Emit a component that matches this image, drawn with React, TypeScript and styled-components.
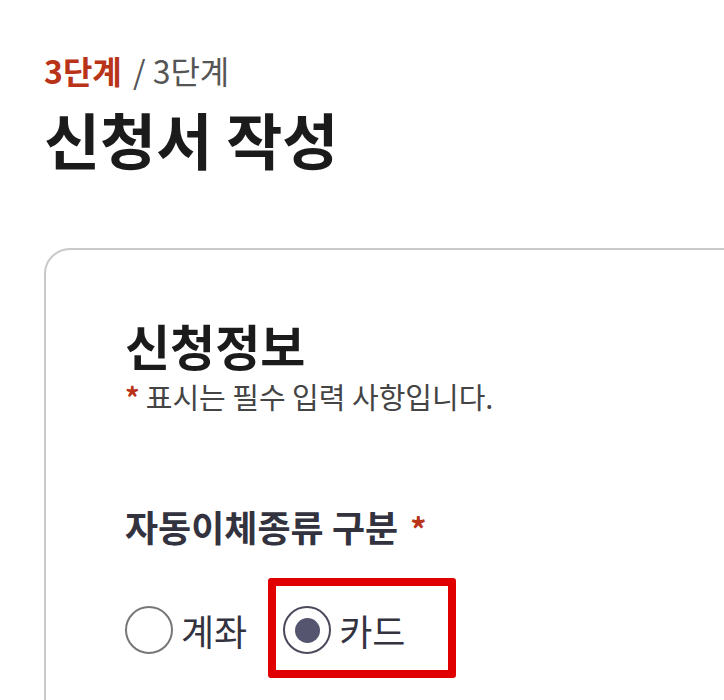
import React, { useState } from 'react'
import styled, { createGlobalStyle } from 'styled-components'

const GlobalStyle = createGlobalStyle`
html, body {
  margin: 0;
  padding: 0;
  background: #ffffff;
  overflow: hidden;
}
body {
  font-family: "Noto Sans CJK KR", "Noto Sans", sans-serif;
  color: #1c1c1c;
}
`

//Components
const Page = styled.div`
width: 724px;
height: 700px;
padding: 50px 0 0 44px;
box-sizing: border-box;
overflow: hidden;
`
const Step = styled.div`
font-size: 32px;
line-height: 40px;
color: #555555;
`
const StepCurrent = styled.strong`
color: #b93318;
font-weight: 700;
margin-right: 4px;
`
const Title = styled.h1`
margin: 11px 0 0 0;
font-size: 61px;
line-height: 76px;
font-weight: 700;
color: #1b1b1b;
`
const Card = styled.section`
margin-top: 71px;
width: 760px;
min-height: 480px;
border: 2px solid #c9c9c9;
border-radius: 26px;
padding: 65px 0 0 79px;
box-sizing: border-box;
`
const SectionTitle = styled.h2`
margin: 0;
font-size: 49px;
line-height: 60px;
font-weight: 700;
color: #1b1b1b;
`
const Notice = styled.p`
margin: 4px 0 0 0;
font-size: 29px;
line-height: 34px;
color: #444444;
`
const Star = styled.span`
color: #b93318;
font-weight: 700;
margin-right: 6px;
`
const FieldLabel = styled.div`
margin-top: 90px;
font-size: 36px;
line-height: 46px;
font-weight: 700;
color: #33333f;
`
const LabelStar = styled.span`
color: #b93318;
margin-left: 12px;
font-size: 32px;
`
const RadioRow = styled.div`
display: flex;
align-items: center;
gap: 36px;
margin-top: 55px;
`
const Option = styled.label`
position: relative;
display: flex;
align-items: center;
gap: 8px;
cursor: pointer;
font-size: 36px;
line-height: 48px;
color: #33333f;
`
const Circle = styled.span<{ $checked: boolean }>`
display: flex;
align-items: center;
justify-content: center;
width: 48px;
height: 48px;
box-sizing: border-box;
border-radius: 50%;
border: 2px solid ${p => (p.$checked ? '#4a4a5c' : '#777777')};
background: #ffffff;

&::after {
  content: '';
  width: 25px;
  height: 25px;
  border-radius: 50%;
  background: #555570;
  display: ${p => (p.$checked ? 'block' : 'none')};
}
`
const Highlight = styled.span`
position: absolute;
left: -15px;
top: -28px;
width: 188px;
height: 100px;
box-sizing: border-box;
border: 8px solid #e10000;
border-radius: 3px;
pointer-events: none;
`

export default function App() {
  const [kind, setKind] = useState('card')

  return (
    <Page>
      <GlobalStyle />
      <Step>
        <StepCurrent>3단계</StepCurrent> / 3단계
      </Step>
      <Title>신청서 작성</Title>
      <Card>
        <SectionTitle>신청정보</SectionTitle>
        <Notice>
          <Star>*</Star>표시는 필수 입력 사항입니다.
        </Notice>
        <FieldLabel>
          자동이체종류 구분<LabelStar>*</LabelStar>
        </FieldLabel>
        <RadioRow>
          <Option onClick={() => setKind('account')}>
            <Circle $checked={kind === 'account'} />
            계좌
          </Option>
          <Option onClick={() => setKind('card')}>
            <Circle $checked={kind === 'card'} />
            카드
            <Highlight />
          </Option>
        </RadioRow>
      </Card>
    </Page>
  )
}
